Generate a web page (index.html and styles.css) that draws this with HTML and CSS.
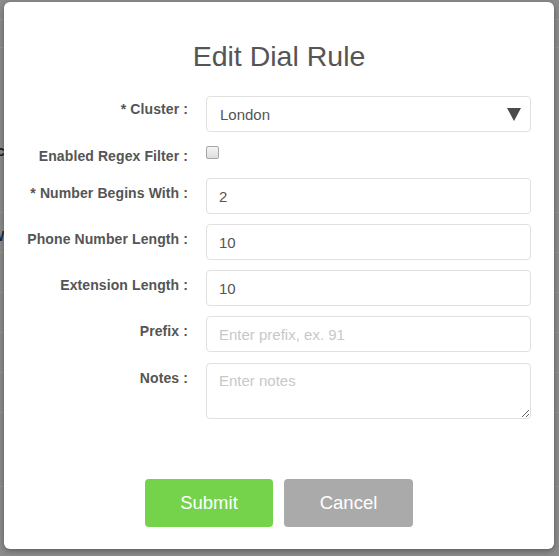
FILE: index.html
```html
<!DOCTYPE html>
<html>
<head>
<meta charset="utf-8">
<link rel="stylesheet" href="styles.css">
</head>
<body>
<div class="backdrop">
  <div class="bg-row h19"></div>
  <div class="bg-row h28"></div>
  <div class="bg-row h165"><span class="bg-text t1">c</span></div>
  <div class="bg-row h40"><span class="bg-text t2">W</span></div>
  <div class="bg-row h40"></div>
  <div class="bg-row h40"></div>
  <div class="bg-row h40"></div>
  <div class="bg-row h40"></div>
  <div class="bg-row h74"></div>
</div>
<div class="modal">
  <h1 class="title">Edit Dial Rule</h1>
  <div class="form">
    <div class="row">
      <label class="lbl lbl-cluster">* Cluster :</label>
      <div class="select"><span>London</span>
        <svg class="arrow" width="14" height="13" viewBox="0 0 14 13"><polygon points="0,0 14,0 7,13" fill="#4a4a4a"/></svg>
      </div>
    </div>
    <div class="row row-check">
      <label class="lbl lbl-check">Enabled Regex Filter :</label>
      <div><span class="checkbox"></span></div>
    </div>
    <div class="row">
      <label class="lbl">* Number Begins With :</label>
      <input class="field" type="text" value="2">
    </div>
    <div class="row">
      <label class="lbl">Phone Number Length :</label>
      <input class="field" type="text" value="10">
    </div>
    <div class="row">
      <label class="lbl">Extension Length :</label>
      <input class="field" type="text" value="10">
    </div>
    <div class="row">
      <label class="lbl">Prefix :</label>
      <input class="field" type="text" placeholder="Enter prefix, ex. 91">
    </div>
    <div class="row row-notes">
      <label class="lbl">Notes :</label>
      <textarea class="field notes" placeholder="Enter notes"></textarea>
    </div>
  </div>
  <div class="footer">
    <button class="btn btn-submit">Submit</button>
    <button class="btn btn-cancel">Cancel</button>
  </div>
</div>
</body>
</html>
```
FILE: styles.css
```css
html, body {
  margin: 0;
  padding: 0;
  width: 559px;
  height: 556px;
  overflow: hidden;
}
body {
  background: #8c8c8c;
  font-family: "Liberation Sans", Arial, sans-serif;
  position: relative;
}
.backdrop {
  display: flex;
  flex-direction: column;
}
.bg-row {
  border-bottom: 1px solid #969696;
  box-sizing: border-box;
  position: relative;
  font-weight: bold;
  font-size: 14px;
  color: #1e1e1e;
}
.h19 { height: 20px; }
.h28 { height: 28px; }
.h165 { height: 165px; }
.h40 { height: 40px; }
.h74 { height: 74px; }
.bg-text {
  display: block;
  margin-left: -3px;
}
.t1 { padding-top: 95px; }
.t2 { padding-top: 15px; color: #1d2a40; }

.modal {
  position: absolute;
  left: 4px;
  top: 2px;
  width: 550px;
  height: 547px;
  box-sizing: border-box;
  background: #fff;
  border-radius: 6px;
  box-shadow: 0 2px 6px rgba(0, 0, 0, 0.35);
  padding: 39px 23px 22px 0;
  display: flex;
  flex-direction: column;
}
.title {
  margin: 0 0 24px 23px;
  font-size: 28.5px;
  line-height: 31px;
  font-weight: normal;
  color: #555;
  text-align: center;
}
.form {
  display: flex;
  flex-direction: column;
  gap: 10px;
}
.row {
  display: grid;
  grid-template-columns: 184px 325px;
  column-gap: 18px;
  align-items: start;
}
.row-check { height: 26px; }
.lbl {
  text-align: right;
  font-size: 14px;
  line-height: 20px;
  font-weight: bold;
  color: #555;
  padding-top: 5px;
  letter-spacing: 0.1px;
}
.lbl-cluster { padding-top: 3px; }
.lbl-check { padding-top: 4px; }
.select, .field {
  box-sizing: border-box;
  height: 36px;
  border: 1px solid #e0e0e0;
  border-radius: 4px;
  background: #fff;
  font-family: "Liberation Sans", Arial, sans-serif;
  font-size: 15px;
  color: #555;
  padding: 0 12px;
  margin: 0;
  outline: none;
  width: 325px;
}
.select {
  display: flex;
  align-items: center;
  justify-content: space-between;
  padding: 1px 9px 0 13px;
}
.arrow { display: block; }
.field::placeholder { color: #c8c8c8; }
.notes {
  height: 56px;
  padding: 7px 12px;
  line-height: 20px;
  resize: vertical;
  display: block;
}
.row-notes { margin-top: 1px; }
.checkbox {
  display: block;
  width: 13px;
  height: 13px;
  box-sizing: border-box;
  margin-top: 4px;
  border: 1px solid #a6a6a6;
  border-radius: 2px;
  background: linear-gradient(#f4f4f4, #dedede);
}
.footer {
  margin-top: auto;
  margin-left: 23px;
  display: flex;
  justify-content: center;
  gap: 11px;
}
.btn {
  height: 48px;
  border: none;
  border-radius: 4px;
  color: #fff;
  font-family: "Liberation Sans", Arial, sans-serif;
  font-size: 18.5px;
  padding: 0;
}
.btn-submit { width: 128px; background: #74d34b; }
.btn-cancel { width: 129px; background: #aaaaaa; }
```
